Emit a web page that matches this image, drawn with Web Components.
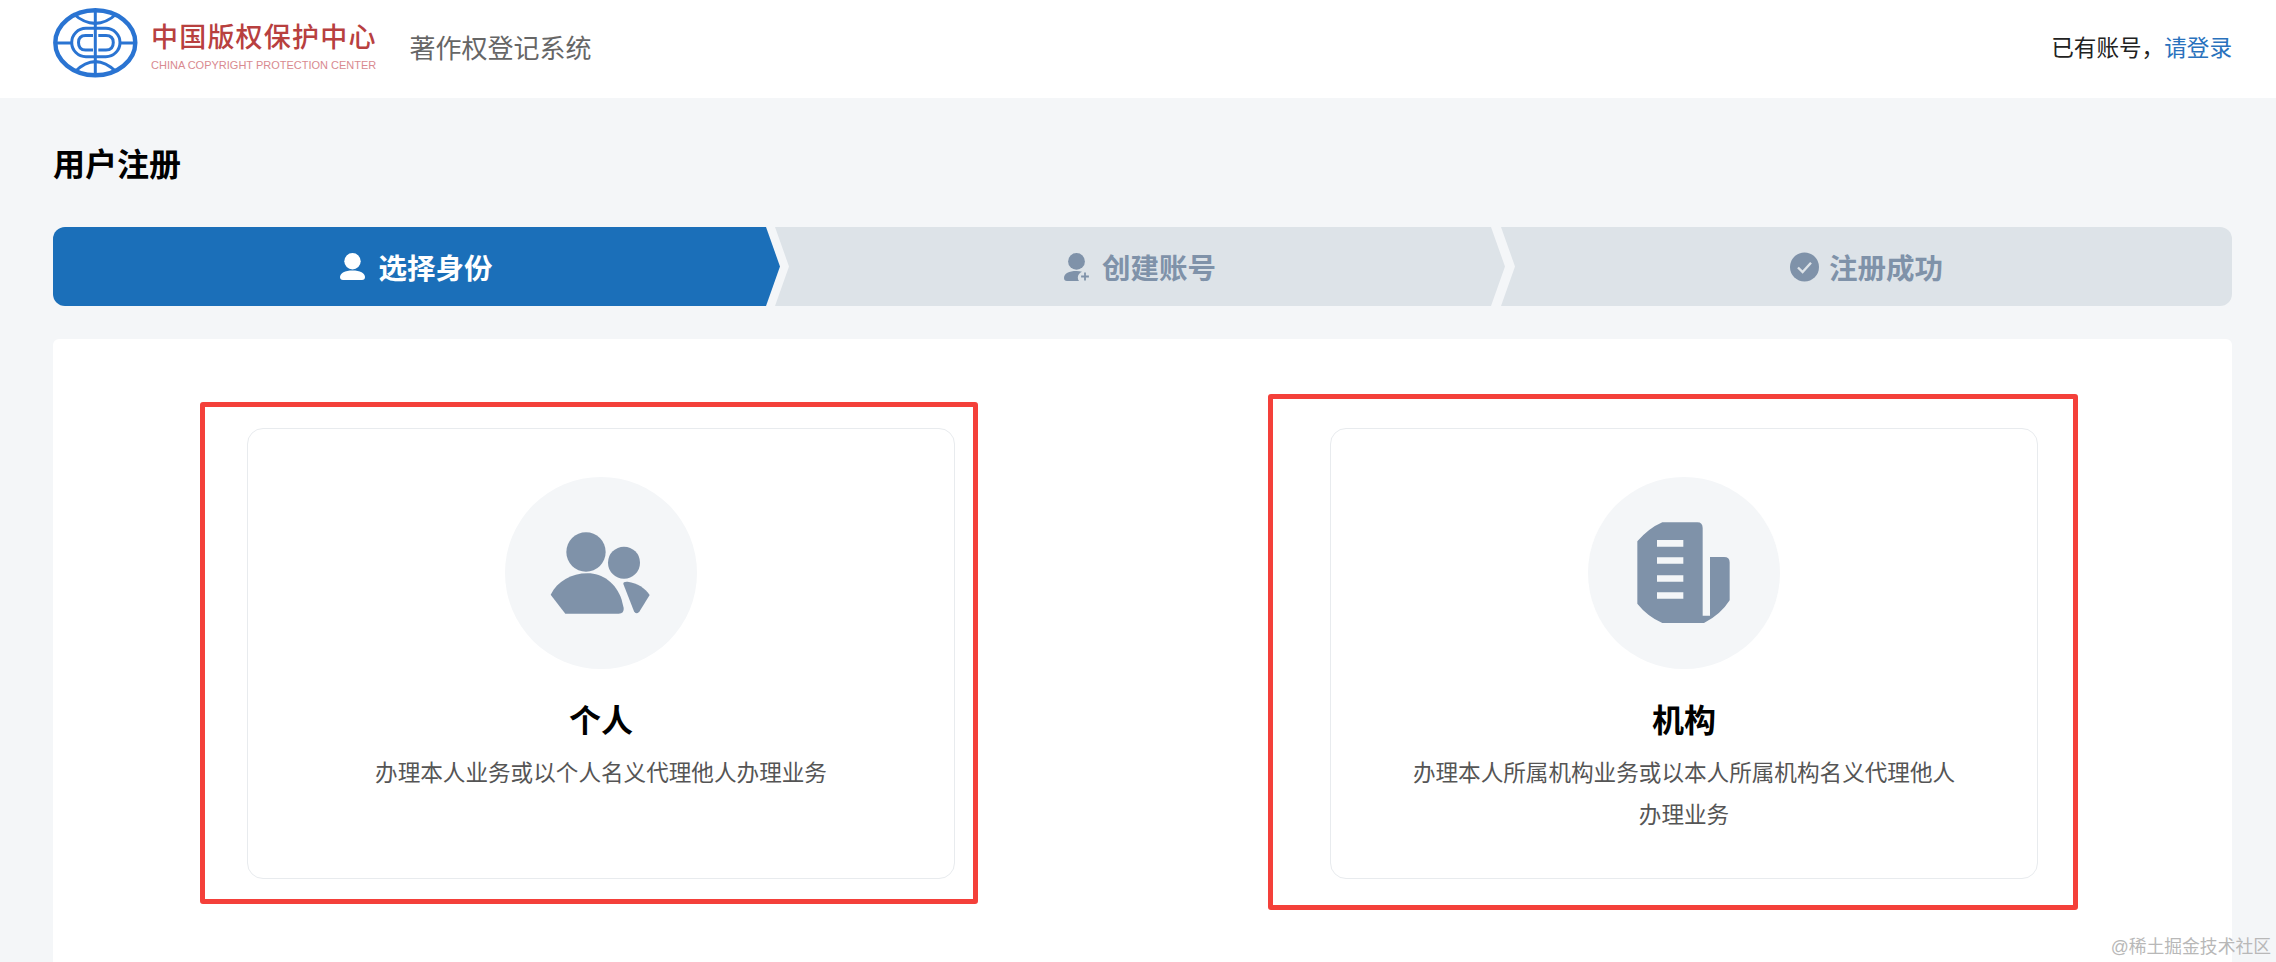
<!DOCTYPE html>
<html lang="zh-CN">
<head>
<meta charset="utf-8">
<title>用户注册</title>
<style>
    html, body {
        margin: 0;
        height: 100%;
        overflow: hidden;
    }
    body {
        background: #f4f6f8;
        color: #000;
        font-family: "Liberation Sans", "Noto Sans CJK SC", sans-serif;
        display: flex;
        flex-direction: column;
    }
    a {
        color: #2a72bd;
        text-decoration: none;
    }
</style>
</head>
<body>
<app-header>
    <logo-mark slot="logo"></logo-mark>
    <span slot="system">著作权登记系统</span>
    <span slot="account">已有账号，<a href="#">请登录</a></span>
</app-header>
<reg-page heading="用户注册">
    <step-bar slot="steps">
        <step-item state="active" gap="13">
            <svg slot="icon" width="25" height="27" viewBox="0 0 25 27" fill="currentColor">
                <ellipse cx="12.5" cy="8.2" rx="8.2" ry="8.2"/>
                <path d="M0 24C0 20 5 17.4 12.5 17.4S25 20 25 24Q25 27 22 27H3Q0 27 0 24Z"/>
            </svg>
            选择身份
        </step-item>
        <step-item state="middle" gap="12">
            <svg slot="icon" width="26" height="28" viewBox="0 0 26 28" fill="currentColor">
                <ellipse cx="12.5" cy="8.4" rx="8.4" ry="8.4"/>
                <path d="M0 25C0 20.5 5 18 12.5 18C14.5 18 16.4 18.2 18 18.7C15.4 20 13.8 22 13.8 24.4C13.8 25.8 14.2 27 15 28H3Q0 28 0 25Z"/>
                <path d="M21 19.6V27.4M17.1 23.5H24.9" fill="none" stroke="currentColor" stroke-width="1.8"/>
            </svg>
            创建账号
        </step-item>
        <step-item state="last" gap="10">
            <svg slot="icon" width="29" height="30" viewBox="0 0 29 30">
                <circle cx="14.5" cy="15" r="14.5" fill="currentColor"/>
                <path d="M8 15.5L12.6 20L21 10.8" fill="none" stroke="#dde3e8" stroke-width="2.4"/>
            </svg>
            注册成功
        </step-item>
    </step-bar>
    <id-card heading="个人">
        <red-frame slot="frame" style="inset:-27px -24px -26px -48px"></red-frame>
        <svg slot="icon" width="192" height="192" viewBox="137 52 576 576" fill="#7f92a9">
            <circle cx="380" cy="277" r="59"/>
            <circle cx="494" cy="309" r="48"/>
            <path d="M274 405C295 365 335 341 385 341C430 341 470 370 487 420L493 445Q495 462 478 462H318Z"/>
            <path d="M492 373Q491 365 505 366C535 370 557 385 571 406L540 456Q530 466 524 455Z"/>
        </svg>
        办理本人业务或以个人名义代理他人办理业务
    </id-card>
    <id-card heading="机构">
        <red-frame slot="frame" style="inset:-35px -41px -32px -63px"></red-frame>
        <svg slot="icon" width="192" height="192" viewBox="147 52 576 576" fill="#7f92a9">
            <path d="M295 245Q330 205 370 188H475Q491 188 491 205V468H513V292H555Q572 292 572 308V422Q545 465 495 490H370Q325 470 295 432Z"/>
            <path d="M354 241H433V261H354ZM354 293H433V312H354ZM354 347H433V366H354ZM354 398H433V417H354Z" fill="#f4f6f8"/>
        </svg>
        办理本人所属机构业务或以本人所属机构名义代理他人办理业务
    </id-card>
</reg-page>
<juejin-mark>@稀土掘金技术社区</juejin-mark>

<script>
(function() {
    // small helper, every element just clones its own template
    function define(name, html) {
        const template = document.createElement("template")
        template.innerHTML = html
        customElements.define(name, class extends HTMLElement {
            constructor() {
                super();
                this.attachShadow({mode: "open"})
                this.shadowRoot.appendChild(template.content.cloneNode(true))
                this.shadowRoot.querySelectorAll("[data-attr]").forEach(el => {
                    el.textContent = this.getAttribute(el.dataset.attr) || ""
                })
                if (this.hasAttribute("gap")) {
                    this.style.setProperty("--icon-gap", this.getAttribute("gap") + "px")
                }
            }
        })
    }

    define("app-header", `
<style>
    :host {
        display: flex;
        align-items: center;
        flex: none;
        height: 98px;
        padding: 0 44px 0 52px;
        background: #fff;
    }
    .system {
        margin-left: 33px;
        color: #666;
        font-size: 26px;
        line-height: 36px;
    }
    .account {
        margin-left: auto;
        color: #222;
        font-size: 22.6px;
        line-height: 32px;
    }
    ::slotted(span) {
        white-space: nowrap;
    }
</style>
<slot name="logo"></slot>
<div class="system"><slot name="system"></slot></div>
<div class="account"><slot name="account"></slot></div>`)

    define("logo-mark", `
<style>
    :host {
        display: flex;
        align-items: center;
        gap: 13px;
    }
    svg {
        display: block;
        margin-top: -12px;
    }
    .text {
        margin-bottom: 5px;
    }
    .name {
        color: #b8403f;
        font-size: 27px;
        font-weight: 500;
        line-height: 32px;
        letter-spacing: 1.2px;
        white-space: nowrap;
    }
    .en {
        margin-top: 5px;
        color: #d98a90;
        font-size: 11px;
        line-height: 12px;
        white-space: nowrap;
    }
</style>
<svg width="86" height="70" viewBox="0 0 86 70" fill="none" stroke="#2a74d2" stroke-width="3">
    <ellipse cx="43.3" cy="34.8" rx="40" ry="32.5" stroke-width="4.4"/>
    <path d="M43.3 3V67"/>
    <path d="M3 35H19M68 35H83"/>
    <path d="M21 5.5Q43.3 25.3 65 5.5M23 63.7Q43.3 43.7 64 63.7"/>
    <rect x="19.7" y="20.3" width="48.3" height="28.4" rx="14.2"/>
    <path d="M41 27.5H33.5Q26.5 27.5 26.5 34.5Q26.5 42 33.5 42H41"/>
    <path d="M46.3 42H54Q61.3 42 61.3 34.5Q61.3 27.5 54 27.5H46.3"/>
</svg>
<div class="text">
    <div class="name">中国版权保护中心</div>
    <div class="en">CHINA COPYRIGHT PROTECTION CENTER</div>
</div>`)

    define("reg-page", `
<style>
    :host {
        display: flex;
        flex-direction: column;
        flex: 1;
        min-height: 0;
        padding: 0 44px 0 53px;
    }
    h1 {
        margin: 48px 0 0;
        font-size: 32px;
        font-weight: 700;
        line-height: 38px;
        color: #000;
    }
    .steps {
        margin-top: 43px;
    }
    .panel {
        flex: 1;
        display: grid;
        grid-template-columns: 708px 708px;
        justify-content: space-between;
        align-content: start;
        margin-top: 33px;
        padding: 89px 194px 0;
        background: #fff;
        border-radius: 6px 6px 0 0;
    }
</style>
<h1 data-attr="heading"></h1>
<div class="steps"><slot name="steps"></slot></div>
<div class="panel"><slot></slot></div>`)

    define("step-bar", `
<style>
    :host {
        display: flex;
        height: 79px;
    }
</style>
<slot></slot>`)

    define("step-item", `
<style>
    :host {
        display: flex;
        align-items: center;
        justify-content: center;
        gap: var(--icon-gap, 12px);
        box-sizing: border-box;
        height: 79px;
        background: #dde3e8;
        color: #7f92a9;
        font-size: 28.5px;
        font-weight: 700;
        white-space: nowrap;
    }
    :host([state="active"]) {
        width: 727px;
        flex: none;
        background: #1b6fb9;
        color: #fff;
        border-radius: 12px 0 0 12px;
        clip-path: polygon(0 0, calc(100% - 14px) 0, 100% 50%, calc(100% - 14px) 100%, 0 100%);
    }
    :host([state="middle"]) {
        width: 730px;
        flex: none;
        margin-left: -5px;
        clip-path: polygon(0 0, calc(100% - 14px) 0, 100% 50%, calc(100% - 14px) 100%, 0 100%, 14px 50%);
    }
    :host([state="last"]) {
        flex: 1;
        margin-left: -4px;
        border-radius: 0 12px 12px 0;
        clip-path: polygon(0 0, 100% 0, 100% 100%, 0 100%, 14px 50%);
    }
    ::slotted(svg) {
        display: block;
    }
</style>
<slot name="icon"></slot>
<span><slot></slot></span>`)

    define("id-card", `
<style>
    :host {
        display: flex;
        flex-direction: column;
        align-items: center;
        position: relative;
        box-sizing: border-box;
        height: 451px;
        padding-top: 48px;
        background: #fff;
        border: 1px solid #e8ebee;
        border-radius: 16px;
        text-align: center;
    }
    .circle {
        width: 192px;
        height: 192px;
        border-radius: 50%;
        background: #f4f6f8;
    }
    ::slotted(svg) {
        display: block;
    }
    h2 {
        margin: 30px 0 0;
        font-size: 32px;
        font-weight: 700;
        line-height: 44px;
        color: #000;
    }
    p {
        width: 560px;
        margin: 10px 0 0;
        color: #555;
        font-size: 22.6px;
        line-height: 42px;
    }
</style>
<slot name="frame"></slot>
<div class="circle"><slot name="icon"></slot></div>
<h2 data-attr="heading"></h2>
<p><slot></slot></p>`)

    // the red boxes somebody drew on top of the screenshot
    define("red-frame", `
<style>
    :host {
        display: block;
        position: absolute;
        border: 5px solid #f4403a;
        border-radius: 3px;
        pointer-events: none;
    }
</style>`)

    define("juejin-mark", `
<style>
    :host {
        position: absolute;
        right: 5px;
        bottom: 3px;
        color: #b8b8b8;
        font-size: 17.8px;
        line-height: 24px;
        white-space: nowrap;
    }
</style>
<slot></slot>`)
})()
</script>
</body>
</html>
